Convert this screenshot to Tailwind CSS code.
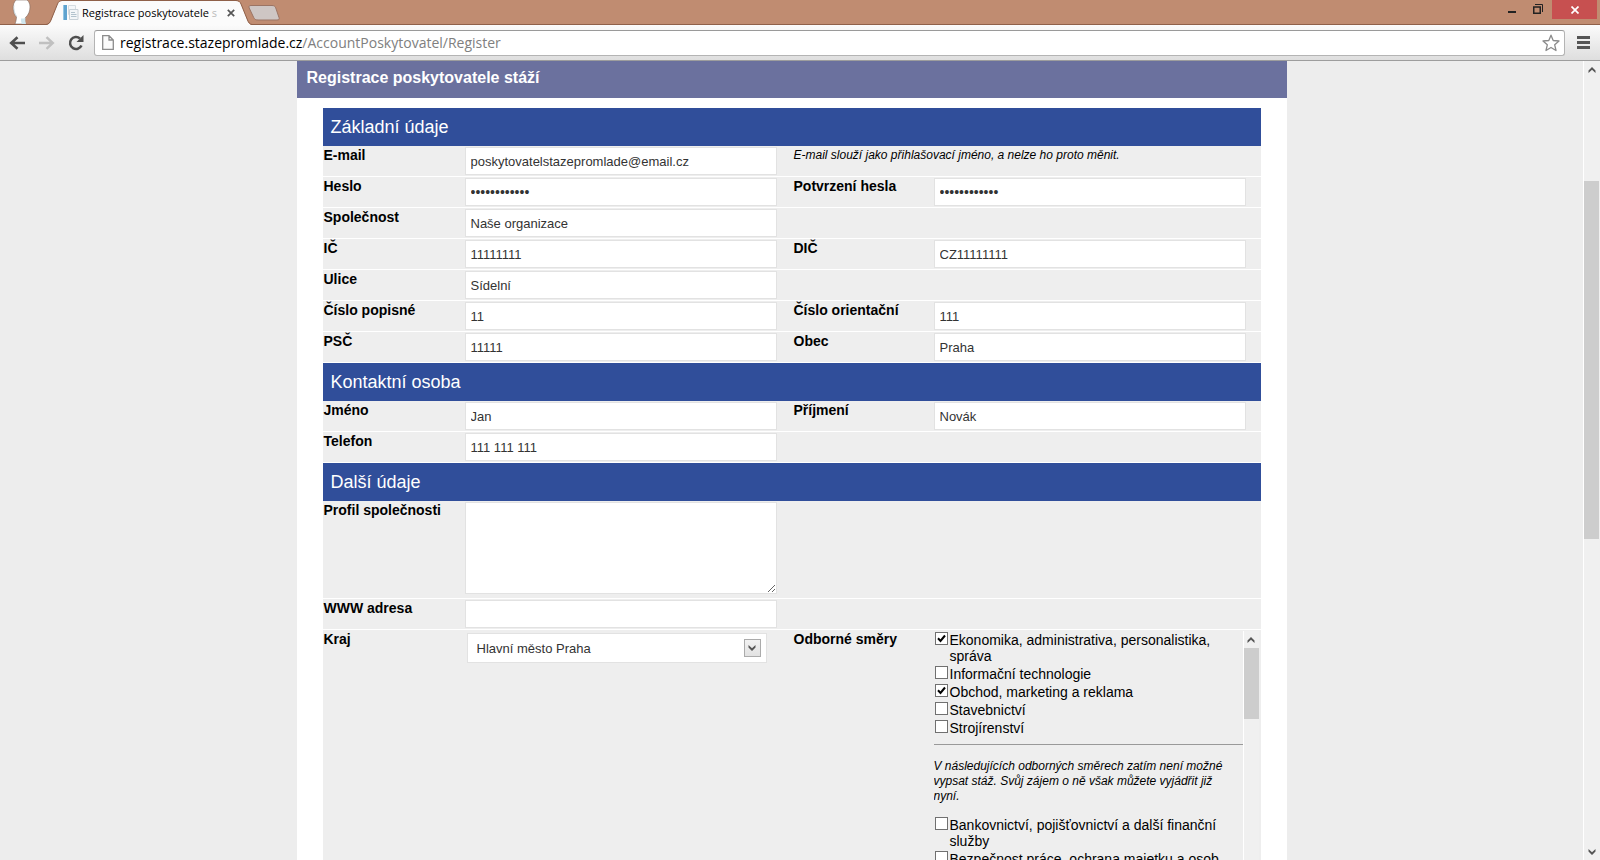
<!DOCTYPE html>
<html lang="cs">
<head>
<meta charset="utf-8">
<meta name="viewport" content="width=device-width, initial-scale=1">
<title>Registrace poskytovatele stáží</title>
<script src="https://cdn.jsdelivr.net/npm/@tailwindcss/browser@4"></script>
</head>
<body class="flex h-screen flex-col overflow-hidden bg-[#ededed] font-['Liberation_Sans',Arial,sans-serif] text-sm text-black">

<!-- Title bar -->
<header class="shrink-0 font-['Open_Sans',sans-serif]">
  <div class="flex h-[25px] items-start border-b border-[#8f6049] bg-[#c08c71]">
    <button aria-label="Profil" class="ml-3 h-6 w-[34px]">
      <svg class="h-6 w-5" viewBox="0 0 20 24"><path d="M4 0C2 2 .8 5 1.200 9c.4 4 1.300 6 3.300 8-.2 3-.8 5-1.500 7h11c-1.500-2-1.500-4-.5-6.500C16.500 15 18 11 18 7c0-3-1-5.500-3-7z" fill="#fff" stroke="#7d6a60" stroke-width=".6"/><path d="M9 18.500c2 .3 3.500 0 4.500-.5-.5 2 0 4 .5 6h-4c-1-2-1.200-3.500-1-5.500z" fill="#cfe6ee"/><path d="M2.500 4c-1 5 0 9 3 13-2.500-2-3.700-5-3.900-9z" fill="#b4c8d0"/></svg>
    </button>
    <div class="relative h-[25px] w-[206px] shrink-0">
      <svg class="absolute inset-0 h-[25px] w-[206px]" viewBox="0 0 206 25"><path d="M0 25c3-.5 4-2 5-4.500L11.500 4C12.500 1.800 14 1 16 1h174c2.500 0 4 .8 5 3l6.500 16.500c1 2.500 2 4 4.500 4.500z" fill="#fbfbfb"/><path d="M0 24.500c3-.5 4-2 5-4.500l6.500-16C12.500 1.500 14 .5 16 .5h174c2.500 0 4 1 5 3.500l6.500 16c1 2.500 2 4 4.500 4.500" fill="none" stroke="#8f6049"/></svg>
      <div class="relative flex h-[25px] items-center pl-[17px]">
        <svg class="size-4 shrink-0" viewBox="0 0 16 16"><path d="M0 0h4v15H0z" fill="#5fa3cf"/><path d="M0 0h1v15H0z" fill="#93c6e4"/><path d="M5.500.5h7v9h-7z" fill="#f4f7f9" stroke="#d5dce0"/><path d="M6.500 4.500h8.500v10H6.500z" fill="#f3f6f8" stroke="#c8d1d7"/><path d="M8 7.500h4M8 9.500h5.500M8 11.500h5.500" stroke="#b3c3cd"/></svg>
        <span class="ml-[3px] w-[138px] text-[11px] whitespace-nowrap text-black">Registrace poskytovatele <span class="text-[#bbb]">s</span></span>
        <button aria-label="Zavřít kartu" class="ml-[7px]"><svg class="size-2" viewBox="0 0 8 8"><path d="M.8.800l6.400 6.400M7.200.800L.8 7.200" stroke="#555" stroke-width="1.700"/></svg></button>
      </div>
    </div>
    <button aria-label="Nová karta" class="-ml-1 mt-[5px]"><svg class="h-4 w-8" viewBox="0 0 32 16"><path d="M3 .5h21c2 0 3 .7 3.700 2.300l3.300 9.700c.5 1.800 0 2.500-2 2.500H10c-2.500 0-3.500-.8-4.300-2.500L1.200 3C.6 1.200 1 .5 3 .5z" fill="#cec6c4" stroke="#9b7464"/></svg></button>
    <div class="ml-auto flex">
      <button aria-label="Minimalizovat" class="flex h-[19px] w-6 justify-center pt-[11px]"><svg class="h-0.5 w-2" viewBox="0 0 8 2"><path d="M0 0h8v2H0z" fill="#222"/></svg></button>
      <button aria-label="Obnovit" class="flex h-[19px] w-7 pl-[9px] pt-1"><svg class="size-[10px]" viewBox="0 0 10 10"><path d="M.75 3h6.500v6.250H.75z" fill="none" stroke="#222" stroke-width="1.500"/><path d="M2 .5h7.500V8" fill="none" stroke="#222"/></svg></button>
      <button aria-label="Zavřít" class="mr-[3px] flex h-[19px] w-[45px] items-center justify-center bg-[#c75050]"><svg class="size-2" viewBox="0 0 8 8"><path d="M.5.500l7 7M7.500.500l-7 7" stroke="#fff" stroke-width="1.700"/></svg></button>
    </div>
  </div>

  <!-- Toolbar -->
  <div class="flex h-9 items-center border-b border-[#9d9d9d] bg-linear-to-b from-[#fbfbfb] to-[#dedede] pl-[9px] pr-[10px]">
    <button aria-label="Zpět"><svg class="h-4 w-4" viewBox="0 0 16 16"><path d="M16 8H3M8.500 2.200L2.200 8l6.300 5.800" fill="none" stroke="#4f4f4f" stroke-width="2.600"/></svg></button>
    <button aria-label="Vpřed" class="ml-[14px]"><svg class="h-4 w-4" viewBox="0 0 16 16"><path d="M0 8h13M7.500 2.200L13.800 8l-6.300 5.800" fill="none" stroke="#c0c0c0" stroke-width="2.400"/></svg></button>
    <button aria-label="Obnovit stránku" class="ml-[13px]"><svg class="h-4 w-4" viewBox="0 0 16 16"><path d="M13.500 10.500A6 6 0 1 1 12 3.500" fill="none" stroke="#4f4f4f" stroke-width="2.500"/><path d="M15.500 0v7H8.500z" fill="#4f4f4f"/></svg></button>
    <div class="ml-[10px] flex h-[26px] flex-1 items-center rounded-[3px] border border-[#b4b4b4] border-t-[#9a9a9a] bg-white pl-[7px] pr-1">
      <svg class="h-[15px] w-3 shrink-0" viewBox="0 0 12 15"><path d="M.7.700h6.300l4.300 4.300v9.300H.7zM7 .700v4.300h4.300" fill="#fbfbfb" stroke="#8c8c8c" stroke-width="1.300"/></svg>
      <a href="#" class="ml-[6px] flex-1 text-sm leading-5 text-[#808080]"><span class="text-black">registrace.stazepromlade.cz</span>/AccountPoskytovatel/Register</a>
      <button aria-label="Přidat záložku"><svg class="size-[18px]" viewBox="0 0 18 18"><path d="M9 1.200l2.200 5.300 5.800.5-4.300 3.800 1.300 5.700L9 13.500l-5 3 1.300-5.700L1 7l5.800-.5z" fill="#fff" stroke="#8a8a8a" stroke-width="1.300" stroke-linejoin="round"/></svg></button>
    </div>
    <button aria-label="Nabídka" class="ml-3"><svg class="h-[13px] w-[13px]" viewBox="0 0 13 13"><path d="M0 1.500h13M0 6.500h13M0 11.500h13" stroke="#555" stroke-width="3"/></svg></button>
  </div>
</header>

<div class="flex min-h-0 flex-1">
  <main class="min-w-0 flex-1 overflow-hidden">
    <form class="mx-auto max-w-[990px] bg-white pb-6">
      <h1 class="bg-[#6b719e] px-[10px] pt-[5px] pb-2 text-base leading-6 font-bold text-white">Registrace poskytovatele stáží</h1>
      <div class="px-[26px] pt-[10px]">

        <h2 class="bg-[#304e9a] px-2 py-[7px] text-lg leading-6 text-white">Základní údaje</h2>
        <div class="grid grid-cols-[141px_329px_140px_1fr] border-b border-white bg-[#eee]">
          <label for="email" class="px-px pt-px leading-4 font-bold">E-mail</label>
          <div class="p-px"><input id="email" type="text" value="poskytovatelstazepromlade@email.cz" class="block h-7 w-[312px] border border-[#e2e2e2] bg-white px-[5px] text-[13px] text-[#333]"></div>
          <p class="col-span-2 px-px pt-0.5 text-xs leading-[15px] italic">E-mail slouží jako přihlašovací jméno, a nelze ho proto měnit.</p>
        </div>
        <div class="grid grid-cols-[141px_329px_140px_1fr] border-b border-white bg-[#eee]">
          <label for="heslo" class="px-px pt-px leading-4 font-bold">Heslo</label>
          <div class="p-px"><input id="heslo" type="password" value="staze1234567" class="block h-7 w-[312px] border border-[#e2e2e2] bg-white px-[5px] text-sm text-[#333]"></div>
          <label for="heslo2" class="px-px pt-px leading-4 font-bold">Potvrzení hesla</label>
          <div class="p-px"><input id="heslo2" type="password" value="staze1234567" class="block h-7 w-[312px] border border-[#e2e2e2] bg-white px-[5px] text-sm text-[#333]"></div>
        </div>
        <div class="grid grid-cols-[141px_329px_140px_1fr] border-b border-white bg-[#eee]">
          <label for="spolecnost" class="px-px pt-px leading-4 font-bold">Společnost</label>
          <div class="p-px"><input id="spolecnost" type="text" value="Naše organizace" class="block h-7 w-[312px] border border-[#e2e2e2] bg-white px-[5px] text-[13px] text-[#333]"></div>
        </div>
        <div class="grid grid-cols-[141px_329px_140px_1fr] border-b border-white bg-[#eee]">
          <label for="ic" class="px-px pt-px leading-4 font-bold">IČ</label>
          <div class="p-px"><input id="ic" type="text" value="11111111" class="block h-7 w-[312px] border border-[#e2e2e2] bg-white px-[5px] text-[13px] text-[#333]"></div>
          <label for="dic" class="px-px pt-px leading-4 font-bold">DIČ</label>
          <div class="p-px"><input id="dic" type="text" value="CZ11111111" class="block h-7 w-[312px] border border-[#e2e2e2] bg-white px-[5px] text-[13px] text-[#333]"></div>
        </div>
        <div class="grid grid-cols-[141px_329px_140px_1fr] border-b border-white bg-[#eee]">
          <label for="ulice" class="px-px pt-px leading-4 font-bold">Ulice</label>
          <div class="p-px"><input id="ulice" type="text" value="Sídelní" class="block h-7 w-[312px] border border-[#e2e2e2] bg-white px-[5px] text-[13px] text-[#333]"></div>
        </div>
        <div class="grid grid-cols-[141px_329px_140px_1fr] border-b border-white bg-[#eee]">
          <label for="cp" class="px-px pt-px leading-4 font-bold">Číslo popisné</label>
          <div class="p-px"><input id="cp" type="text" value="11" class="block h-7 w-[312px] border border-[#e2e2e2] bg-white px-[5px] text-[13px] text-[#333]"></div>
          <label for="co" class="px-px pt-px leading-4 font-bold">Číslo orientační</label>
          <div class="p-px"><input id="co" type="text" value="111" class="block h-7 w-[312px] border border-[#e2e2e2] bg-white px-[5px] text-[13px] text-[#333]"></div>
        </div>
        <div class="grid grid-cols-[141px_329px_140px_1fr] border-b border-white bg-[#eee]">
          <label for="psc" class="px-px pt-px leading-4 font-bold">PSČ</label>
          <div class="p-px"><input id="psc" type="text" value="11111" class="block h-7 w-[312px] border border-[#e2e2e2] bg-white px-[5px] text-[13px] text-[#333]"></div>
          <label for="obec" class="px-px pt-px leading-4 font-bold">Obec</label>
          <div class="p-px"><input id="obec" type="text" value="Praha" class="block h-7 w-[312px] border border-[#e2e2e2] bg-white px-[5px] text-[13px] text-[#333]"></div>
        </div>

        <h2 class="bg-[#304e9a] px-2 py-[7px] text-lg leading-6 text-white">Kontaktní osoba</h2>
        <div class="grid grid-cols-[141px_329px_140px_1fr] border-b border-white bg-[#eee]">
          <label for="jmeno" class="px-px pt-px leading-4 font-bold">Jméno</label>
          <div class="p-px"><input id="jmeno" type="text" value="Jan" class="block h-7 w-[312px] border border-[#e2e2e2] bg-white px-[5px] text-[13px] text-[#333]"></div>
          <label for="prijmeni" class="px-px pt-px leading-4 font-bold">Příjmení</label>
          <div class="p-px"><input id="prijmeni" type="text" value="Novák" class="block h-7 w-[312px] border border-[#e2e2e2] bg-white px-[5px] text-[13px] text-[#333]"></div>
        </div>
        <div class="grid grid-cols-[141px_329px_140px_1fr] border-b border-white bg-[#eee]">
          <label for="telefon" class="px-px pt-px leading-4 font-bold">Telefon</label>
          <div class="p-px"><input id="telefon" type="text" value="111 111 111" class="block h-7 w-[312px] border border-[#e2e2e2] bg-white px-[5px] text-[13px] text-[#333]"></div>
        </div>

        <h2 class="bg-[#304e9a] px-2 py-[7px] text-lg leading-6 text-white">Další údaje</h2>
        <div class="grid grid-cols-[141px_329px_140px_1fr] border-b border-white bg-[#eee]">
          <label for="profil" class="px-px pt-px leading-4 font-bold">Profil společnosti</label>
          <div class="px-px pt-px pb-1"><textarea id="profil" class="block h-[92px] w-[312px] resize border border-[#e2e2e2] bg-white px-[5px] text-[13px] text-[#333]"></textarea></div>
        </div>
        <div class="grid grid-cols-[141px_329px_140px_1fr] border-b border-white bg-[#eee]">
          <label for="www" class="px-px pt-px leading-4 font-bold">WWW adresa</label>
          <div class="p-px"><input id="www" type="text" value="" class="block h-7 w-[312px] border border-[#e2e2e2] bg-white px-[5px] text-[13px] text-[#333]"></div>
        </div>
        <div class="grid grid-cols-[141px_329px_140px_1fr] border-b border-white bg-[#eee]">
          <label for="kraj" class="px-px pt-px leading-4 font-bold">Kraj</label>
          <div class="pl-[3px] pt-[3px]">
            <div class="relative w-[300px]">
              <select id="kraj" class="block h-[30px] w-full appearance-none border border-[#e2e2e2] bg-white px-[9px] pt-0.5 text-[13px] text-[#333]"><option>Hlavní město Praha</option></select>
              <span class="pointer-events-none absolute top-[6px] right-[6px] flex h-[18px] w-[17px] items-center justify-center border border-[#ababab] bg-linear-to-b from-[#f2f2f2] to-[#e2e2e2]"><svg class="h-[6px] w-2" viewBox="0 0 8 6"><path d="M.5 0L4 3.200 7.500 0v2.500L4 6 .5 2.500z" fill="#555"/></svg></span>
            </div>
          </div>
          <span id="smery" class="px-px pt-px leading-4 font-bold">Odborné směry</span>

          
          <div role="group" aria-labelledby="smery" class="mt-px mr-0.5 ml-px flex h-[300px] overflow-hidden">
            <div class="min-w-0 flex-1 leading-4">
              <label class="relative flex gap-0.5 py-px pl-px">
                <input type="checkbox" checked class="peer size-[13px] shrink-0 appearance-none border border-[#707070] bg-white">
                <svg class="absolute top-px left-px hidden size-[13px] peer-checked:block" viewBox="0 0 13 13"><path d="M3 6.300l2.500 2.700L10 3.500" fill="none" stroke="#000" stroke-width="2"/></svg>
                <span>Ekonomika, administrativa, personalistika, správa</span>
              </label>
              <label class="relative flex gap-0.5 py-px pl-px">
                <input type="checkbox" class="peer size-[13px] shrink-0 appearance-none border border-[#707070] bg-white">
                <svg class="absolute top-px left-px hidden size-[13px] peer-checked:block" viewBox="0 0 13 13"><path d="M3 6.300l2.500 2.700L10 3.500" fill="none" stroke="#000" stroke-width="2"/></svg>
                <span>Informační technologie</span>
              </label>
              <label class="relative flex gap-0.5 py-px pl-px">
                <input type="checkbox" checked class="peer size-[13px] shrink-0 appearance-none border border-[#707070] bg-white">
                <svg class="absolute top-px left-px hidden size-[13px] peer-checked:block" viewBox="0 0 13 13"><path d="M3 6.300l2.500 2.700L10 3.500" fill="none" stroke="#000" stroke-width="2"/></svg>
                <span>Obchod, marketing a reklama</span>
              </label>
              <label class="relative flex gap-0.5 py-px pl-px">
                <input type="checkbox" class="peer size-[13px] shrink-0 appearance-none border border-[#707070] bg-white">
                <svg class="absolute top-px left-px hidden size-[13px] peer-checked:block" viewBox="0 0 13 13"><path d="M3 6.300l2.500 2.700L10 3.500" fill="none" stroke="#000" stroke-width="2"/></svg>
                <span>Stavebnictví</span>
              </label>
              <label class="relative flex gap-0.5 py-px pl-px">
                <input type="checkbox" class="peer size-[13px] shrink-0 appearance-none border border-[#707070] bg-white">
                <svg class="absolute top-px left-px hidden size-[13px] peer-checked:block" viewBox="0 0 13 13"><path d="M3 6.300l2.500 2.700L10 3.500" fill="none" stroke="#000" stroke-width="2"/></svg>
                <span>Strojírenství</span>
              </label>
              <hr class="mt-[7px] border-[#999]">
              <p class="mt-[14px] mb-3 pr-2 text-xs leading-[15px] italic">V následujících odborných směrech zatím není možné vypsat stáž. Svůj zájem o ně však můžete vyjádřit již nyní.</p>
              <label class="relative flex gap-0.5 py-px pl-px">
                <input type="checkbox" class="peer size-[13px] shrink-0 appearance-none border border-[#707070] bg-white">
                <svg class="absolute top-px left-px hidden size-[13px] peer-checked:block" viewBox="0 0 13 13"><path d="M3 6.300l2.500 2.700L10 3.500" fill="none" stroke="#000" stroke-width="2"/></svg>
                <span>Bankovnictví, pojišťovnictví a další finanční služby</span>
              </label>
              <label class="relative flex gap-0.5 py-px pl-px">
                <input type="checkbox" class="peer size-[13px] shrink-0 appearance-none border border-[#707070] bg-white">
                <svg class="absolute top-px left-px hidden size-[13px] peer-checked:block" viewBox="0 0 13 13"><path d="M3 6.300l2.500 2.700L10 3.500" fill="none" stroke="#000" stroke-width="2"/></svg>
                <span>Bezpečnost práce, ochrana majetku a osob</span>
              </label>
            </div>
            <div aria-hidden="true" class="flex w-4 shrink-0 flex-col border-l border-white bg-[#f0f0f0]">
              <span class="flex h-[17px] items-center justify-center"><svg class="h-[6px] w-2" viewBox="0 0 8 6"><path d="M.5 6L4 2.800 7.500 6V3.500L4 0 .5 3.500z" fill="#555"/></svg></span>
              <span class="h-[71px] bg-[#cdcdcd]"></span>
            </div>
          </div>
        </div>
      </div>
    </form>
  </main>

  <!-- Page scrollbar -->
  <div aria-hidden="true" class="flex w-[17px] shrink-0 flex-col border-l border-white bg-[#f0f0f0] pr-px">
    <span class="flex h-[18px] items-center justify-center"><svg class="h-[6px] w-2" viewBox="0 0 8 6"><path d="M.5 6L4 2.800 7.500 6V3.500L4 0 .5 3.500z" fill="#555"/></svg></span>
    <span class="flex-[102]"></span>
    <span class="flex-[358] bg-[#cdcdcd]"></span>
    <span class="flex-[304]"></span>
    <span class="flex h-[17px] items-center justify-center"><svg class="h-[6px] w-2" viewBox="0 0 8 6"><path d="M.5 0L4 3.200 7.500 0v2.500L4 6 .5 2.500z" fill="#555"/></svg></span>
  </div>
</div>
</body>
</html>
